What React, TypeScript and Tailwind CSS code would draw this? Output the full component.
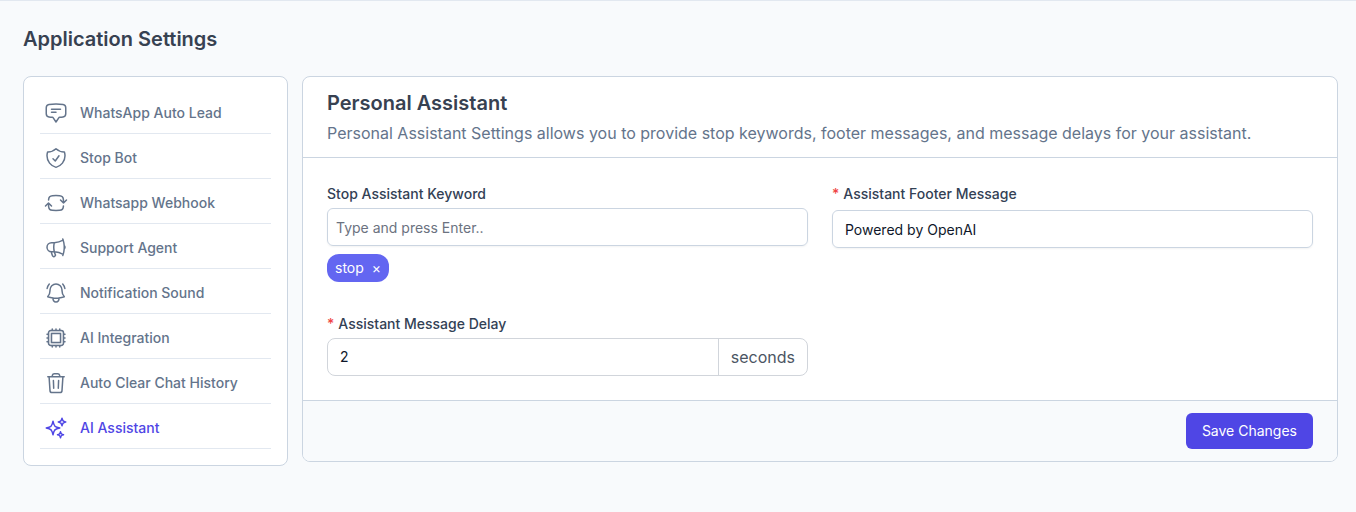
import { useState } from "react";
import type { ReactNode } from "react";
import type { IconType } from "react-icons";
import {
  HiOutlineArrowPathRoundedSquare,
  HiOutlineBellAlert,
  HiOutlineChatBubbleBottomCenterText,
  HiOutlineMegaphone,
  HiOutlineShieldCheck,
  HiOutlineSparkles,
} from "react-icons/hi2";

type IconProps = { className?: string };

function TrashIcon({ className }: IconProps) {
  return (
    <svg
      viewBox="0 0 24 24"
      fill="none"
      stroke="currentColor"
      strokeWidth={1.5}
      strokeLinecap="round"
      strokeLinejoin="round"
      className={className}
      aria-hidden="true"
    >
      <path d="M3.8 5.7h16.4M5.1 5.9l.9 13.7a2 2 0 0 0 2 1.9h8a2 2 0 0 0 2-1.9l.9-13.7M8 5.5l.4-1.3a2 2 0 0 1 1.9-1.5h3.4a2 2 0 0 1 1.9 1.5l.4 1.3M9.4 9.5l.3 7.8M14.6 9.5l-.3 7.8" />
    </svg>
  );
}

function ChipIcon({ className }: IconProps) {
  return (
    <svg
      viewBox="0 0 24 24"
      fill="none"
      stroke="currentColor"
      strokeWidth={1.5}
      strokeLinecap="round"
      strokeLinejoin="round"
      className={className}
      aria-hidden="true"
    >
      <path
        d="M5 5h14v14H5zM7 7v10h10V7z"
        fill="currentColor"
        fillOpacity={0.1}
        fillRule="evenodd"
        stroke="none"
      />
      <path d="M8.25 3v1.5M4.5 8.25H3m18 0h-1.5M4.5 12H3m18 0h-1.5m-15 3.75H3m18 0h-1.5M8.25 19.5V21M12 3v1.5m0 15V21m3.75-18v1.5m0 15V21m-9-1.5h10.5a2.25 2.25 0 0 0 2.25-2.25V6.75a2.25 2.25 0 0 0-2.25-2.25H6.75A2.25 2.25 0 0 0 4.5 6.75v10.5a2.25 2.25 0 0 0 2.25 2.25Zm.75-12h9v9h-9v-9Z" />
    </svg>
  );
}

type NavItem = {
  label: string;
  icon: IconType | typeof TrashIcon;
  active?: boolean;
};

const navItems: NavItem[] = [
  { label: "WhatsApp Auto Lead", icon: HiOutlineChatBubbleBottomCenterText },
  { label: "Stop Bot", icon: HiOutlineShieldCheck },
  { label: "Whatsapp Webhook", icon: HiOutlineArrowPathRoundedSquare },
  { label: "Support Agent", icon: HiOutlineMegaphone },
  { label: "Notification Sound", icon: HiOutlineBellAlert },
  { label: "AI Integration", icon: ChipIcon },
  { label: "Auto Clear Chat History", icon: TrashIcon },
  { label: "AI Assistant", icon: HiOutlineSparkles, active: true },
];

function Sidebar() {
  return (
    <nav
      aria-label="Settings"
      className="w-[265px] shrink-0 rounded-lg border border-[#cbd5e1] bg-white px-4 pt-3 pb-4"
    >
      <ul>
        {navItems.map(({ label, icon: Icon, active }) => (
          <li key={label} className="border-b border-[#e2e8f0]">
            <a
              href="#"
              aria-current={active ? "page" : undefined}
              className={
                active
                  ? "flex h-11 items-center gap-3 px-1 pt-1 text-sm font-medium text-[#4f46e5]"
                  : "flex h-11 items-center gap-3 px-1 pt-1 text-sm font-medium text-[#64748b]"
              }
            >
              <Icon className="size-6 shrink-0" />
              {label}
            </a>
          </li>
        ))}
      </ul>
    </nav>
  );
}

function FieldLabel({
  htmlFor,
  required,
  children,
}: {
  htmlFor: string;
  required?: boolean;
  children: ReactNode;
}) {
  return (
    <label
      htmlFor={htmlFor}
      className="flex gap-1 text-sm font-medium text-[#334155]"
    >
      {required && <span className="text-[#ef4444]">*</span>}
      {children}
    </label>
  );
}

export default function App() {
  const [keywords, setKeywords] = useState(["stop"]);
  const [draft, setDraft] = useState("");

  return (
    <div className="min-h-screen border-t border-[#e2e8f0] bg-[#f8fafc] pt-6 pr-[18px] pb-11 pl-[23px] font-['Inter',sans-serif]">
      <h1 className="text-xl font-semibold text-[#374151]">
        Application Settings
      </h1>
      <div className="mt-[23px] flex items-start gap-[14px]">
        <Sidebar />
        <form
          onSubmit={(e) => e.preventDefault()}
          className="min-w-0 flex-1 overflow-hidden rounded-lg border border-[#cbd5e1] bg-white"
        >
          <header className="border-b border-[#cbd5e1] px-6 py-3">
            <h2 className="text-xl font-semibold text-[#374151]">
              Personal Assistant
            </h2>
            <p className="mt-1 text-base text-[#64748b]">
              Personal Assistant Settings allows you to provide stop keywords,
              footer messages, and message delays for your assistant.
            </p>
          </header>

          <div className="grid grid-cols-2 gap-x-6 gap-y-8 px-6 pt-[26px] pb-6">
            <div>
              <FieldLabel htmlFor="keyword">Stop Assistant Keyword</FieldLabel>
              <input
                id="keyword"
                type="text"
                value={draft}
                onChange={(e) => setDraft(e.target.value)}
                onKeyDown={(e) => {
                  if (e.key === "Enter" && draft.trim()) {
                    e.preventDefault();
                    setKeywords([...keywords, draft.trim()]);
                    setDraft("");
                  }
                }}
                placeholder="Type and press Enter.."
                className="mt-1 h-[38px] w-full rounded-md border border-[#cbd5e1] px-2 text-sm text-[#0f172a] shadow-xs placeholder:text-[#6b7280]"
              />
              <ul className="mt-2 flex flex-wrap gap-2">
                {keywords.map((word) => (
                  <li
                    key={word}
                    className="flex h-7 items-center gap-2 rounded-xl bg-[#6366f1] px-2 text-sm text-white"
                  >
                    {word}
                    <button
                      type="button"
                      aria-label={`Remove ${word}`}
                      onClick={() =>
                        setKeywords(keywords.filter((k) => k !== word))
                      }
                    >
                      ×
                    </button>
                  </li>
                ))}
              </ul>
            </div>

            <div>
              <FieldLabel htmlFor="footer" required>
                Assistant Footer Message
              </FieldLabel>
              <input
                id="footer"
                type="text"
                defaultValue="Powered by OpenAI"
                className="mt-[6px] h-[38px] w-full rounded-md border border-[#cbd5e1] px-3 text-sm text-[#0f172a] shadow-xs"
              />
            </div>

            <div>
              <FieldLabel htmlFor="delay" required>
                Assistant Message Delay
              </FieldLabel>
              <div className="mt-1 flex h-[38px] overflow-hidden rounded-lg border border-[#d1d5db]">
                <input
                  id="delay"
                  type="text"
                  inputMode="numeric"
                  defaultValue="2"
                  className="min-w-0 flex-1 px-3 text-sm text-[#0f172a]"
                />
                <span className="flex items-center border-l border-[#d1d5db] px-3 text-base text-[#4b5563]">
                  seconds
                </span>
              </div>
            </div>
          </div>

          <footer className="flex justify-end border-t border-[#cbd5e1] bg-[#f8fafc] px-6 py-3">
            <button
              type="submit"
              className="h-9 rounded-md bg-[#4f46e5] px-4 text-sm text-white"
            >
              Save Changes
            </button>
          </footer>
        </form>
      </div>
    </div>
  );
}
